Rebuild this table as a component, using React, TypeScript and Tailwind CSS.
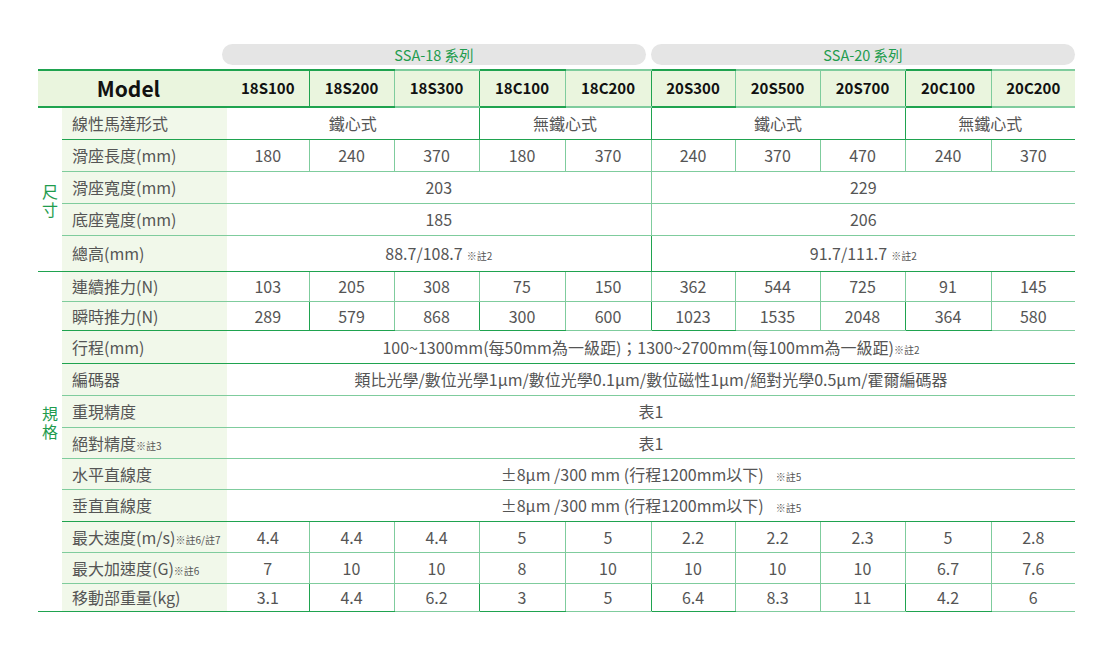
import type { ReactNode } from "react";

const DARK = "border-[#1fa34f]";
const LIGHT = "border-[#7fcc9d]";

// column start x: 309 dark, 394 light, 479 dark, 565 light, 651 dark, ...
const VLINE = ["", DARK, LIGHT, DARK, LIGHT, DARK, LIGHT, LIGHT, DARK, LIGHT];

const MODELS = ["18S100", "18S200", "18S300", "18C100", "18C200", "20S300", "20S500", "20S700", "20C100", "20C200"];

const COLS = [24, 165, 82, 85, 85, 86, 86, 84, 85, 85, 86, 84];

type Cell = { t: ReactNode; span?: number };
type Row = { label: ReactNode; cells: Cell[]; h: number; dark?: boolean };

const Note = ({ children, gap = "ml-1" }: { children: ReactNode; gap?: string }) => (
  <span className={`text-[10px] ${gap} align-baseline`}>{children}</span>
);

const nums = (arr: string[]): Cell[] => arr.map((t) => ({ t }));

const SIZE_ROWS: Row[] = [
  {
    label: "線性馬達形式",
    h: 32,
    dark: true,
    cells: [
      { t: "鐵心式", span: 3 },
      { t: "無鐵心式", span: 2 },
      { t: "鐵心式", span: 3 },
      { t: "無鐵心式", span: 2 },
    ],
  },
  { label: "滑座長度(mm)", h: 32, cells: nums(["180", "240", "370", "180", "370", "240", "370", "470", "240", "370"]) },
  { label: "滑座寬度(mm)", h: 32, cells: [{ t: "203", span: 5 }, { t: "229", span: 5 }] },
  { label: "底座寬度(mm)", h: 32, cells: [{ t: "185", span: 5 }, { t: "206", span: 5 }] },
  {
    label: "總高(mm)",
    h: 36,
    dark: true,
    cells: [
      { t: <>88.7/108.7<Note>※註2</Note></>, span: 5 },
      { t: <>91.7/111.7<Note>※註2</Note></>, span: 5 },
    ],
  },
];

const SPEC_ROWS: Row[] = [
  { label: "連續推力(N)", h: 30, cells: nums(["103", "205", "308", "75", "150", "362", "544", "725", "91", "145"]) },
  { label: "瞬時推力(N)", h: 29, dark: true, cells: nums(["289", "579", "868", "300", "600", "1023", "1535", "2048", "364", "580"]) },
  {
    label: "行程(mm)",
    h: 33,
    dark: true,
    cells: [{ t: <>100~1300mm(每50mm為一級距)；1300~2700mm(每100mm為一級距)<Note gap="ml-0">※註2</Note></>, span: 10 }],
  },
  {
    label: "編碼器",
    h: 32,
    cells: [{ t: "類比光學/數位光學1μm/數位光學0.1μm/數位磁性1μm/絕對光學0.5μm/霍爾編碼器", span: 10 }],
  },
  { label: "重現精度", h: 32, cells: [{ t: "表1", span: 10 }] },
  { label: <>絕對精度<Note gap="ml-0">※註3</Note></>, h: 31, cells: [{ t: "表1", span: 10 }] },
  {
    label: "水平直線度",
    h: 31,
    cells: [{ t: <>±8μm /300 mm (行程1200mm以下)<span className="text-[10px] ml-3">※註5</span></>, span: 10 }],
  },
  {
    label: "垂直直線度",
    h: 32,
    dark: true,
    cells: [{ t: <>±8μm /300 mm (行程1200mm以下)<span className="text-[10px] ml-3">※註5</span></>, span: 10 }],
  },
  { label: <>最大速度(m/s)<Note gap="ml-0">※註6/註7</Note></>, h: 31, cells: nums(["4.4", "4.4", "4.4", "5", "5", "2.2", "2.2", "2.3", "5", "2.8"]) },
  { label: <>最大加速度(G)<Note gap="ml-0">※註6</Note></>, h: 31, cells: nums(["7", "10", "10", "8", "10", "10", "10", "10", "6.7", "7.6"]) },
  { label: "移動部重量(kg)", h: 28, dark: true, cells: nums(["3.1", "4.4", "6.2", "3", "5", "6.4", "8.3", "11", "4.2", "6"]) },
];

function DataRow({ row, category }: { row: Row; category?: ReactNode }) {
  let col = 0;
  return (
    <tr style={{ height: row.h }}>
      {category}
      <td className={`bg-[#f1f8ea] pl-[10px] text-[16px] text-[#555] whitespace-nowrap border-b ${row.dark ? DARK : LIGHT}`}>
        {row.label}
      </td>
      {row.cells.map((c, i) => {
        const start = col;
        col += c.span ?? 1;
        return (
          <td
            key={i}
            colSpan={c.span ?? 1}
            className={`text-center text-[16px] text-[#555] whitespace-nowrap border-b ${row.dark ? DARK : LIGHT} ${
              start > 0 ? `border-l ${VLINE[start]}` : ""
            }`}
          >
            {c.t}
          </td>
        );
      })}
    </tr>
  );
}

function Category({ text, span, pt }: { text: string; span: number; pt: string }) {
  return (
    <td rowSpan={span} className={`align-top ${pt} text-center border-b ${DARK}`}>
      <span className="inline-block [writing-mode:vertical-rl] text-[16px] leading-[18px] tracking-[2px] text-[#1f9c4e]">
        {text}
      </span>
    </td>
  );
}

export default function App() {
  return (
    <div className="w-[1119px] h-[653px] bg-white" style={{ fontFamily: '"Noto Sans CJK TC", "Noto Sans", sans-serif' }}>
      <div className="flex gap-[5px] pl-[222px] pt-[44px]">
        <div className="w-[424px] h-[21px] rounded-full bg-[#e5e5e5] flex items-center justify-center text-[14.5px] text-[#1f9c4e]">
          SSA-18 系列
        </div>
        <div className="w-[424px] h-[21px] rounded-full bg-[#e5e5e5] flex items-center justify-center text-[14.5px] text-[#1f9c4e]">
          SSA-20 系列
        </div>
      </div>
      <table className="ml-[38px] mt-[4px] w-[1037px] table-fixed border-collapse">
        <colgroup>
          {COLS.map((w, i) => (
            <col key={i} style={{ width: w }} />
          ))}
        </colgroup>
        <tbody>
          <tr className="h-[37px] bg-[#eaf5de]">
            <th colSpan={2} className={`border-y-2 ${DARK} text-[21px] font-bold text-[#111] pr-[8px]`}>
              Model
            </th>
            {MODELS.map((m, i) => (
              <th
                key={m}
                className={`border-y-2 ${DARK} text-[15px] font-bold text-[#111] ${i > 0 ? `border-l ${VLINE[i]}` : ""}`}
              >
                {m}
              </th>
            ))}
          </tr>
          {SIZE_ROWS.map((r, i) => (
            <DataRow key={i} row={r} category={i === 0 ? <Category text="尺寸" span={5} pt="pt-[76px]" /> : undefined} />
          ))}
          {SPEC_ROWS.map((r, i) => (
            <DataRow key={i} row={r} category={i === 0 ? <Category text="規格" span={11} pt="pt-[134px]" /> : undefined} />
          ))}
        </tbody>
      </table>
    </div>
  );
}
